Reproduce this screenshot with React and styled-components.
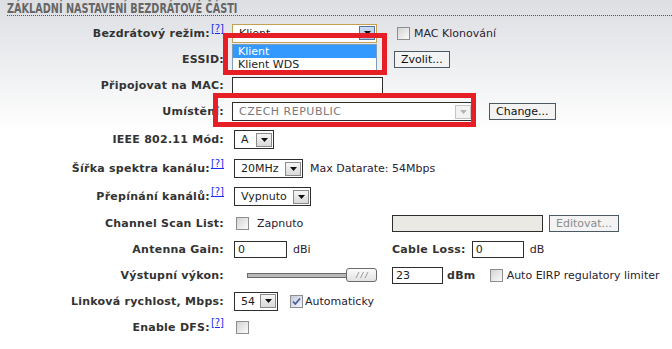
import React from "react";
import styled, { createGlobalStyle } from "styled-components";

const GlobalStyle = createGlobalStyle`
  html, body {
    margin: 0;
    padding: 0;
    background: #ffffff;
  }
  * {
    box-sizing: border-box;
  }
`;

const Page = styled.div`
  position: relative;
  width: 672px;
  height: 349px;
  overflow: hidden;
  background: linear-gradient(to bottom, #dcdee2 0px, #ffffff 130px);
  font-family: "DejaVu Sans", Verdana, sans-serif;
  font-size: 11px;
  color: #2a2230;
`;

const Header = styled.div`
  margin-left: 7px;
  height: 16px;
  padding-top: 1px;
  border-bottom: 1px dotted #555;
  white-space: nowrap;
`;

const HeaderText = styled.span`
  display: inline-block;
  font-family: "DejaVu Sans Condensed", "DejaVu Sans", sans-serif;
  font-weight: bold;
  font-size: 14px;
  line-height: 14px;
  color: #666;
  transform: scaleX(0.77);
  transform-origin: left center;
`;

const Form = styled.div`
  margin-top: 4px;
`;

const Row = styled.div`
  display: grid;
  grid-template-columns: 224px 152px 1fr;
  column-gap: 8px;
  align-items: center;
  height: ${({ $h }) => $h}px;
`;

const Label = styled.div`
  text-align: right;
  font-weight: bold;
  letter-spacing: 0.25px;
  color: #333;
  white-space: nowrap;
`;

const Help = styled.a`
  position: relative;
  top: -5px;
  margin-left: 1px;
  font-weight: normal;
  font-size: 10px;
  letter-spacing: 0;
  color: #1a2cf0;
  text-decoration: underline;
`;

const Cell = styled.div`
  display: flex;
  align-items: center;
  gap: ${({ $gap }) => ($gap !== undefined ? $gap : 6)}px;
  padding-left: ${({ $pl }) => $pl || 0}px;
  grid-column: span ${({ $span }) => $span || 1};
  white-space: nowrap;
  position: relative;
`;

const Text = styled.span`
  font-weight: ${({ $bold }) => ($bold ? "bold" : "normal")};
  letter-spacing: ${({ $bold }) => ($bold ? "0.3px" : "0")};
  color: ${({ $bold }) => ($bold ? "#333" : "#2a2230")};
`;

const SelectBox = styled.div`
  position: relative;
  display: inline-flex;
  align-items: center;
  justify-content: space-between;
  width: ${({ $w }) => $w}px;
  height: 19px;
  padding: 0 1px 0 6px;
  background: #fff;
  border: 1px solid ${({ $focus }) => ($focus ? "#c4a052" : "#2e2e2e")};
  color: ${({ $disabled }) => ($disabled ? "#7a7a7a" : "#1d1d1d")};
  letter-spacing: ${({ $disabled }) => ($disabled ? "0.5px" : "0")};
`;

const ArrowBtn = styled.span`
  display: inline-flex;
  align-items: center;
  justify-content: center;
  width: 16px;
  height: 14px;
  border: 1px solid
    ${({ $mode }) =>
      $mode === "disabled" ? "#c4c4c4" : $mode === "focus" ? "#56739c" : "#8a8a8a"};
  background: ${({ $mode }) =>
    $mode === "disabled"
      ? "#f3f3f3"
      : $mode === "focus"
      ? "linear-gradient(#c8dcf2, #a9c6e8)"
      : "linear-gradient(#f6f6f6, #d9d9d9)"};
  svg {
    fill: ${({ $mode }) => ($mode === "disabled" ? "#b4b4b4" : "#111")};
  }
`;

const DropList = styled.div`
  position: absolute;
  left: -1px;
  top: 19px;
  width: 145px;
  background: #fff;
  border: 1px solid #7f9db9;
  letter-spacing: 0;
  z-index: 2;
`;

const DropItem = styled.div`
  height: 13px;
  line-height: 13px;
  padding-left: 5px;
  color: ${({ $active }) => ($active ? "#fff" : "#1d1d1d")};
  background: ${({ $active }) => ($active ? "#3399ff" : "#fff")};
`;

const Input = styled.input`
  width: ${({ $w }) => $w}px;
  height: 17px;
  padding: 0 3px;
  border: 1px solid #2e2e2e;
  background: ${({ disabled }) => (disabled ? "#ebe9e3" : "#fff")};
  font-family: "DejaVu Sans", Verdana, sans-serif;
  font-size: 11px;
  color: #1d1d1d;
  outline: none;
`;

const Button = styled.button`
  height: 17px;
  padding: 0 6px;
  border: 1px solid #4b5963;
  background: #f3f3f3;
  font-family: "DejaVu Sans", Verdana, sans-serif;
  font-size: 11px;
  line-height: 15px;
  color: ${({ disabled }) => (disabled ? "#8c8c8c" : "#111")};
`;

const Check = styled.span`
  display: inline-flex;
  align-items: center;
  justify-content: center;
  width: 13px;
  height: 13px;
  border: 1px solid #8c8e90;
  background: ${({ $checked }) =>
    $checked
      ? "linear-gradient(135deg, #c3cadc, #f4f6fb)"
      : "linear-gradient(135deg, #d3d3d3, #fbfbfb)"};
  margin-left: ${({ $ml }) => $ml || 0}px;
`;

const Slider = styled.div`
  display: flex;
  align-items: center;
`;

const Track = styled.div`
  width: 101px;
  height: 5px;
  border: 1px solid #6a6a6a;
  background: #b9b9b9;
`;

const Handle = styled.div`
  display: flex;
  align-items: center;
  justify-content: center;
  width: 31px;
  height: 14px;
  margin-left: -2px;
  border: 1px solid #6a6a6a;
  border-radius: 3px;
  background: linear-gradient(#fbfbfb, #e2e2e2);
`;

const RedBox = styled.div`
  position: absolute;
  left: ${({ $x }) => $x}px;
  top: ${({ $y }) => $y}px;
  width: ${({ $w }) => $w}px;
  height: ${({ $hh }) => $hh}px;
  border: 5px solid #e61e26;
  z-index: 3;
`;

const Arrow = () => (
  <svg width="7" height="4" viewBox="0 0 7 4">
    <path d="M0 0h7L3.5 4z" />
  </svg>
);

const Select = ({ w, value, mode, children }) => (
  <SelectBox $w={w} $focus={mode === "focus"} $disabled={mode === "disabled"}>
    <span>{value}</span>
    <ArrowBtn $mode={mode}>
      <Arrow />
    </ArrowBtn>
    {children}
  </SelectBox>
);

const Checkbox = ({ checked, ml }) => (
  <Check $checked={checked} $ml={ml}>
    {checked && (
      <svg width="9" height="9" viewBox="0 0 9 9">
        <path d="M1 4.5l2.3 2.5L8 1.5" fill="none" stroke="#4a5c92" strokeWidth="1.7" />
      </svg>
    )}
  </Check>
);

const Q = () => <Help href="#">[?]</Help>;

export default function App() {
  return (
    <>
      <GlobalStyle />
      <Page>
        <Header>
          <HeaderText>ZÁKLADNÍ NASTAVENÍ BEZDRÁTOVÉ ČÁSTI</HeaderText>
        </Header>
        <Form>
          <Row $h={26}>
            <Label>
              Bezdrátový režim:<Q />
            </Label>
            <Cell>
              <Select w={145} value="Klient" mode="focus">
                <DropList>
                  <DropItem $active>Klient</DropItem>
                  <DropItem>Klient WDS</DropItem>
                </DropList>
              </Select>
            </Cell>
            <Cell $pl={5} $gap={4}>
              <Checkbox />
              <Text>MAC Klonování</Text>
            </Cell>
          </Row>

          <Row $h={26}>
            <Label>ESSID:</Label>
            <Cell>
              <Input $w={145} readOnly value="" />
            </Cell>
            <Cell $pl={2}>
              <Button>Zvolit...</Button>
            </Cell>
          </Row>

          <Row $h={26}>
            <Label>Připojovat na MAC:</Label>
            <Cell>
              <Input $w={151} readOnly value="" />
            </Cell>
          </Row>

          <Row $h={27}>
            <Label>Umístění:</Label>
            <Cell $span={2} $gap={16}>
              <Select w={241} value="CZECH REPUBLIC" mode="disabled" />
              <Button>Change...</Button>
            </Cell>
          </Row>

          <Row $h={29}>
            <Label>IEEE 802.11 Mód:</Label>
            <Cell $pl={2}>
              <Select w={40} value="A" />
            </Cell>
          </Row>

          <Row $h={29}>
            <Label>
              Šířka spektra kanálu:<Q />
            </Label>
            <Cell $pl={2} $span={2} $gap={7}>
              <Select w={69} value="20MHz" />
              <Text>Max Datarate: 54Mbps</Text>
            </Cell>
          </Row>

          <Row $h={27}>
            <Label>
              Přepínání kanálů:<Q />
            </Label>
            <Cell $pl={2}>
              <Select w={77} value="Vypnuto" />
            </Cell>
          </Row>

          <Row $h={26}>
            <Label>Channel Scan List:</Label>
            <Cell $pl={4} $gap={8}>
              <Checkbox />
              <Text>Zapnuto</Text>
            </Cell>
            <Cell>
              <Input $w={151} disabled value="" />
              <Button disabled>Editovat...</Button>
            </Cell>
          </Row>

          <Row $h={26}>
            <Label>Antenna Gain:</Label>
            <Cell $pl={2}>
              <Input $w={53} readOnly value="0" />
              <Text>dBi</Text>
            </Cell>
            <Cell>
              <Text $bold>Cable Loss:</Text>
              <Input $w={52} readOnly value="0" />
              <Text>dB</Text>
            </Cell>
          </Row>

          <Row $h={26}>
            <Label>Výstupní výkon:</Label>
            <Cell $pl={15}>
              <Slider>
                <Track />
                <Handle>
                  <svg width="14" height="6" viewBox="0 0 14 6">
                    <path d="M1 6L4 0M5.5 6L8.5 0M10 6L13 0" stroke="#9a9a9a" strokeWidth="1" />
                  </svg>
                </Handle>
              </Slider>
            </Cell>
            <Cell $gap={4}>
              <Input $w={51} readOnly value="23" />
              <Text $bold>dBm</Text>
              <Checkbox ml={10} />
              <Text>Auto EIRP regulatory limiter</Text>
            </Cell>
          </Row>

          <Row $h={26}>
            <Label>Linková rychlost, Mbps:</Label>
            <Cell $pl={2} $span={2} $gap={2}>
              <Select w={44} value="54" />
              <Checkbox checked ml={10} />
              <Text>Automaticky</Text>
            </Cell>
          </Row>

          <Row $h={26}>
            <Label>
              Enable DFS:<Q />
            </Label>
            <Cell $pl={4}>
              <Checkbox />
            </Cell>
          </Row>
        </Form>

        <RedBox $x={223} $y={33} $w={164} $hh={42} />
        <RedBox $x={213} $y={93} $w={263} $hh={34} />
      </Page>
    </>
  );
}
